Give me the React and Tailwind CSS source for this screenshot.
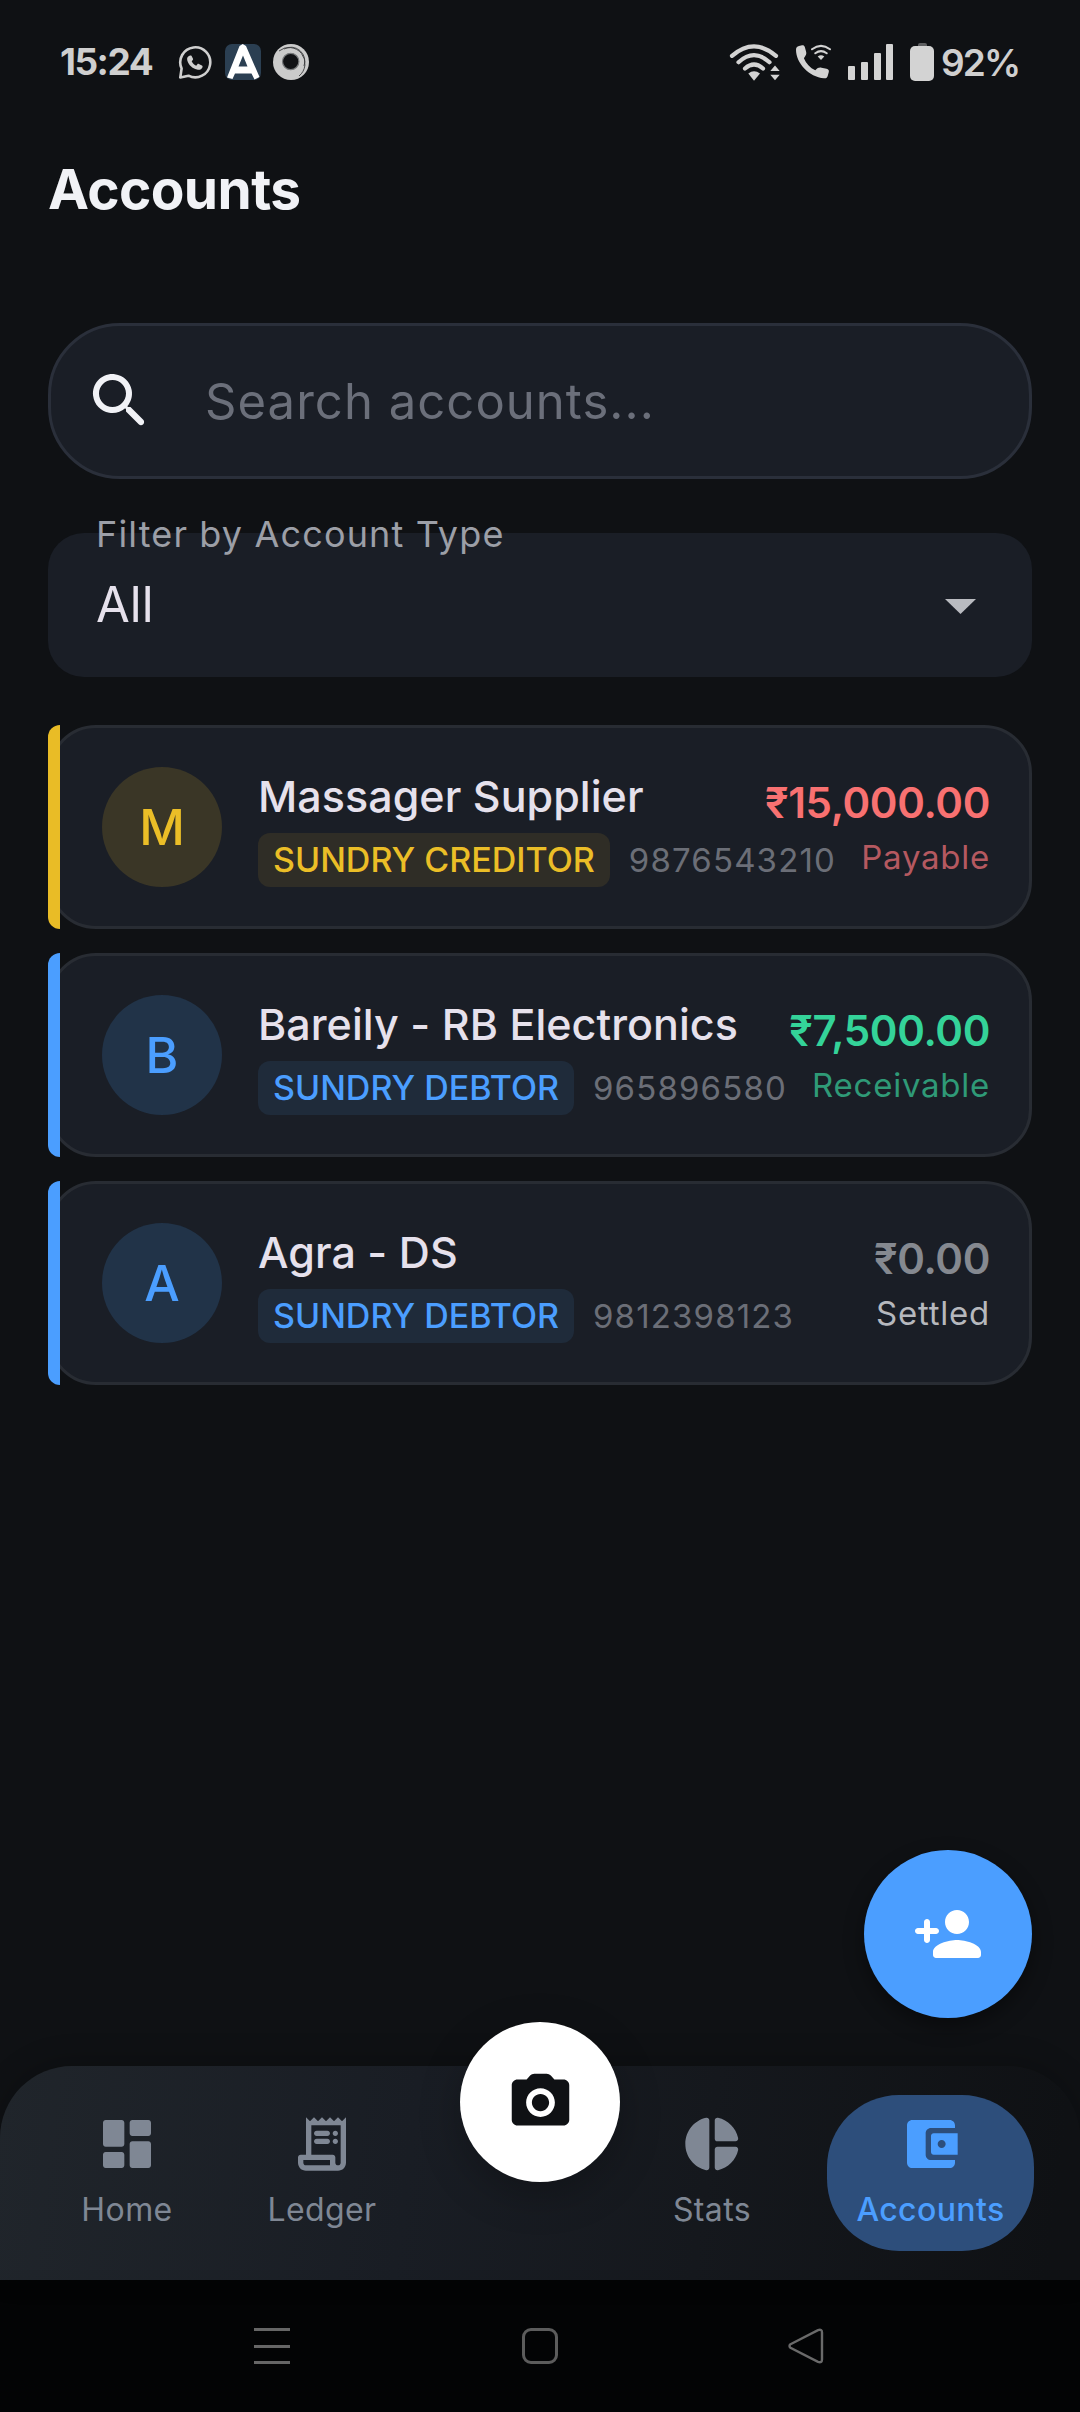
import React from "react";

const CARDS = [
  {
    initial: "M",
    name: "Massager Supplier",
    type: "SUNDRY CREDITOR",
    phone: "9876543210",
    amount: "₹15,000.00",
    status: "Payable",
    bar: "bg-[#e9bc26]",
    avatar: "bg-[#3a3626] text-[#ebbe27]",
    badge: "bg-[#2f2d26] text-[#ebbe27]",
    amountColor: "text-[#f87171]",
    statusColor: "text-[#b55960]",
  },
  {
    initial: "B",
    name: "Bareily - RB Electronics",
    type: "SUNDRY DEBTOR",
    phone: "965896580",
    amount: "₹7,500.00",
    status: "Receivable",
    bar: "bg-[#4b9eff]",
    avatar: "bg-[#213348] text-[#4b9eff]",
    badge: "bg-[#1f2b3a] text-[#4b9eff]",
    amountColor: "text-[#34d399]",
    statusColor: "text-[#2f9a77]",
  },
  {
    initial: "A",
    name: "Agra - DS",
    type: "SUNDRY DEBTOR",
    phone: "9812398123",
    amount: "₹0.00",
    status: "Settled",
    bar: "bg-[#4b9eff]",
    avatar: "bg-[#213348] text-[#4b9eff]",
    badge: "bg-[#1f2b3a] text-[#4b9eff]",
    amountColor: "text-[#858990]",
    statusColor: "text-[#b6b8bd]",
  },
];

const ICONS = {
  search:
    "M15.5 14h-.79l-.28-.27c1.2-1.4 1.82-3.31 1.48-5.34-.47-2.78-2.79-5-5.59-5.34-4.23-.52-7.79 3.04-7.27 7.27.34 2.8 2.56 5.12 5.34 5.59 2.03.34 3.94-.28 5.34-1.48l.27.28v.79l4.25 4.25c.41.41 1.08.41 1.49 0 .41-.41.41-1.08 0-1.49L15.5 14zm-6 0C7.01 14 5 11.99 5 9.5S7.01 5 9.5 5 14 7.01 14 9.5 11.99 14 9.5 14z",
  home: "M4 13h6c.55 0 1-.45 1-1V4c0-.55-.45-1-1-1H4c-.55 0-1 .45-1 1v8c0 .55.45 1 1 1zm0 8h6c.55 0 1-.45 1-1v-4c0-.55-.45-1-1-1H4c-.55 0-1 .45-1 1v4c0 .55.45 1 1 1zm10 0h6c.55 0 1-.45 1-1v-8c0-.55-.45-1-1-1h-6c-.55 0-1 .45-1 1v8c0 .55.45 1 1 1zM13 4v4c0 .55.45 1 1 1h6c.55 0 1-.45 1-1V4c0-.55-.45-1-1-1h-6c-.55 0-1 .45-1 1z",
  ledger:
    "M19.5 3.5L18 2l-1.5 1.5L15 2l-1.5 1.5L12 2l-1.5 1.5L9 2 7.5 3.5 6 2v14H4c-.55 0-1 .45-1 1v2c0 1.66 1.34 3 3 3h12c1.66 0 3-1.34 3-3V2l-1.5 1.5zM15 20H6c-.55 0-1-.45-1-1v-1h10v2zm4-1c0 .55-.45 1-1 1s-1-.45-1-1v-2c0-.55-.45-1-1-1H8V5h11v14zM14 7h-4c-.55 0-1 .45-1 1s.45 1 1 1h4c.55 0 1-.45 1-1s-.45-1-1-1zm0 3h-4c-.55 0-1 .45-1 1s.45 1 1 1h4c.55 0 1-.45 1-1s-.45-1-1-1zM17 7c.55 0 1 .45 1 1s-.45 1-1 1-1-.45-1-1 .45-1 1-1zm0 3c.55 0 1 .45 1 1s-.45 1-1 1-1-.45-1-1 .45-1 1-1z",
  stats:
    "M11 3.18v17.64c0 .64-.59 1.12-1.21.98C5.32 20.8 2 16.79 2 12s3.32-8.8 7.79-9.8c.62-.14 1.21.34 1.21.98zm2.03 0v6.81c0 .55.45 1 1 1h6.79c.64 0 1.12-.59.98-1.22-.85-3.76-3.8-6.72-7.55-7.57-.63-.14-1.22.34-1.22.98zm0 10.83v6.81c0 .64.59 1.12 1.22.98 3.76-.85 6.71-3.82 7.56-7.58.14-.62-.35-1.22-.98-1.22h-6.79c-.56.01-1.01.46-1.01 1.01z",
  wallet:
    "M10 16V8c0-1.1.89-2 2-2h9V5c0-1.1-.9-2-2-2H5c-1.11 0-2 .9-2 2v14c0 1.1.89 2 2 2h14c1.1 0 2-.9 2-2v-1h-9c-1.11 0-2-.9-2-2zm3-8c-.55 0-1 .45-1 1v6c0 .55.45 1 1 1h9V8h-9zm3 5.5c-.83 0-1.5-.67-1.5-1.5s.67-1.5 1.5-1.5 1.5.67 1.5 1.5-.67 1.5-1.5 1.5z",
  camera:
    "M20 4h-3.17l-1.24-1.35A1.99 1.99 0 0 0 14.12 2H9.88c-.56 0-1.1.24-1.48.65L7.17 4H4c-1.1 0-2 .9-2 2v12c0 1.1.9 2 2 2h16c1.1 0 2-.9 2-2V6c0-1.1-.9-2-2-2zm-8 13c-2.76 0-5-2.24-5-5s2.24-5 5-5 5 2.24 5 5-2.24 5-5 5zm0-8c1.66 0 3 1.34 3 3s-1.34 3-3 3-3-1.34-3-3 1.34-3 3-3z",
  addPerson:
    "M15 12c2.21 0 4-1.79 4-4s-1.79-4-4-4-4 1.79-4 4 1.79 4 4 4zm-9-2V8c0-.55-.45-1-1-1s-1 .45-1 1v2H2c-.55 0-1 .45-1 1s.45 1 1 1h2v2c0 .55.45 1 1 1s1-.45 1-1v-2h2c.55 0 1-.45 1-1s-.45-1-1-1H6zm9 4c-2.67 0-8 1.34-8 4v1c0 .55.45 1 1 1h14c.55 0 1-.45 1-1v-1c0-2.66-5.33-4-8-4z",
};

function Icon({ name, className }) {
  return (
    <svg viewBox="0 0 24 24" fill="currentColor" className={`shrink-0 ${className}`}>
      <path d={ICONS[name]} />
    </svg>
  );
}

function StatusBar() {
  return (
    <div className="flex h-[124px] items-center pl-[60px] text-[#cfcfcf]">
      <div className="flex w-[669px] items-center">
        <span className="w-[118px] text-[37px] font-bold tracking-[-1.5px]">15:24</span>
        <svg viewBox="0 0 36 36" fill="none" className="mt-[2px] h-[36px] w-[36px]">
          <path d="M2.3 32.4L3.6 23.5A15 15 0 1 1 10.5 30.7z" stroke="#cfcfcf" strokeWidth="2.6" strokeLinejoin="round" />
          <path d="M11.5 10.8c-2 .8-2.8 2.4-2.2 4.7 1.5 4.7 5 7.9 9.7 9.1 2.5.6 4.8-.3 5.5-2.4.3-.8 0-1.4-.6-1.7l-3-1.5c-.6-.3-1.1-.2-1.5.3l-1.2 1.4c-2-.9-3.5-2.4-4.5-4.5l1.1-1.3c.4-.5.4-.9.1-1.5l-1.3-2.3c-.4-.6-1.3-.6-2.1-.3z" fill="#cfcfcf" />
        </svg>
        <svg viewBox="0 0 36 36" className="ml-[11px] h-[36px] w-[36px]">
          <rect width="36" height="36" rx="7" fill="#2b3f52" />
          <path d="M17.7 0L21 2L34.5 33L29.5 35.5L26.5 29.5H10L7.5 35L2 33.5L14.5 2zM18 11.5L13.5 22.5H22.5z" fill="#fff" />
        </svg>
        <svg viewBox="0 0 36 36" className="ml-[12px] h-[36px] w-[36px]">
          <circle cx="18" cy="18" r="18" fill="#cbcbcb" />
          <circle cx="17.7" cy="17.5" r="8.2" fill="#111215" stroke="#77797b" strokeWidth="1.2" />
          <path d="M6 7A15.5 15.5 0 0 1 26 32M11 5A14 14 0 0 1 31 22" fill="none" stroke="#3a3b3d" strokeWidth=".9" />
        </svg>
      </div>
      <div className="flex items-center">
        <svg viewBox="0 0 52 38" fill="none" stroke="#d3d3d3" strokeWidth="4.2" strokeLinecap="round" className="h-[38px] w-[52px]">
          <path d="M3 12.8Q25 -6 47 12.8M9.5 19.2Q25 5 40.5 19.2M16 25.5Q25 17.5 34 25.5" />
          <path d="M19.3 30.5q5.7-4.5 11.7 0l-6 7.2z" fill="#d3d3d3" stroke="none" />
          <path d="M41.3 27.9l4.7-5.4 4.7 5.4zM41.3 31.8l4.7 5.4 4.7-5.4z" fill="#d3d3d3" stroke="none" />
        </svg>
        <svg viewBox="0 0 36 36" fill="none" className="ml-[15px] h-[36px] w-[36px]">
          <path d="M0 5.7C0 3.5 1 2.8 3 2L6 1.2C7.5 1 8.3 1.5 8.8 3L10.2 8C10.6 10 10 11.5 7.9 14.2C10 19.5 14 23.8 19.3 26.3C21.5 23.8 23.3 23.3 25.5 23.7L30.5 24.8C32.5 25.3 33.2 26.3 32.8 28L31.7 32C31 34 30.3 34.5 28 34.3C13 33 0 19 0 5.7z" fill="#d3d3d3" />
          <path d="M16 5.3q9-6.8 18 0M19.3 9.3q5.7-4.3 11.4 0" stroke="#d3d3d3" strokeWidth="2" strokeLinecap="round" />
          <path d="M21.7 12.5q3.3-2.5 6.6 0L25 16z" fill="#d3d3d3" />
        </svg>
        <div className="ml-[16px] flex h-[36px] w-[45.5px] items-end justify-between">
          <span className="h-[14px] w-[7px] rounded-[1px] bg-[#d3d3d3]" />
          <span className="h-[18px] w-[7px] rounded-[1px] bg-[#d3d3d3]" />
          <span className="h-[27px] w-[7px] rounded-[1px] bg-[#d3d3d3]" />
          <span className="h-[36px] w-[7px] rounded-[1px] bg-[#d3d3d3]" />
        </div>
        <div className="ml-[16.5px] flex w-[24px] flex-col items-center">
          <span className="h-[3px] w-[9px] rounded-t-[2px] bg-[#5d5e60]" />
          <span className="h-[35px] w-[24px] rounded-[5px] bg-[#d3d3d3]" />
        </div>
        <span className="mt-[2px] ml-[7px] text-[37px] font-semibold tracking-[-1.86px]">92%</span>
      </div>
    </div>
  );
}

function AccountCard({ card }) {
  return (
    <div className="relative flex h-[204px] rounded-[48px] border-[3px] border-[#282c33] bg-[#1a1e26] pl-[51px] pr-[39px]">
      <span className={`absolute -left-[3px] -top-[3px] h-[204px] w-[12px] rounded-l-[12px] ${card.bar}`} />
      <div className={`mt-[39px] flex h-[120px] w-[120px] shrink-0 items-center justify-center rounded-full text-[50px] leading-none font-[550] ${card.avatar}`}>
        {card.initial}
      </div>
      <div className="mt-[42px] ml-[36px] flex min-w-0 flex-1 flex-col gap-[10px]">
        <div className="text-[43px] leading-[53px] font-medium tracking-[0.05px] whitespace-nowrap text-[#e6e1ec]">{card.name}</div>
        <div className="flex items-center gap-[19px]">
          <span className={`rounded-[12px] px-[15px] text-[34px] leading-[54px] font-medium whitespace-nowrap ${card.badge}`}>
            {card.type}
          </span>
          <span className="text-[33px] leading-[52px] tracking-[1.15px] text-[#6b6e77]">{card.phone}</span>
        </div>
      </div>
      <div className="mt-[50px] flex shrink-0 flex-col items-end gap-[9px]">
        <div className={`text-[42px] leading-[50px] font-semibold tracking-[-0.35px] ${card.amountColor}`}>{card.amount}</div>
        <div className={`text-[33px] leading-[40px] tracking-[0.75px] ${card.statusColor}`}>{card.status}</div>
      </div>
    </div>
  );
}

function NavItem({ icon, label, className }) {
  return (
    <div className={`mt-[29px] flex h-[156px] shrink-0 flex-col items-center gap-[14px] pt-[17px] ${className}`}>
      <Icon name={icon} className="h-[64px] w-[64px]" />
      <span className="text-[32px] leading-[40px] tracking-[0.4px]">{label}</span>
    </div>
  );
}

export default function App() {
  return (
    <div className="relative flex h-[2412px] w-[1080px] flex-col overflow-hidden bg-[#0f1114] font-['Inter','Noto_Sans',sans-serif]">
      <StatusBar />
      <h1 className="pl-[48px] text-[55px] leading-[130px] font-bold tracking-[-0.6px] text-[#f1f2f6]">Accounts</h1>

      <main className="flex flex-1 flex-col px-[48px] pt-[69px]">
        <div className="flex h-[156px] shrink-0 items-center rounded-[72px] border-[3px] border-[#2a2f3a] bg-[#1a1e26] pl-[33px]">
          <Icon name="search" className="h-[72px] w-[72px] text-[#f1f2f6]" />
          <span className="mt-[1px] ml-[49px] text-[49px] tracking-[1.05px] text-[#6b6f7a]">Search accounts...</span>
        </div>

        <div className="relative mt-[54px] flex h-[144px] shrink-0 items-center justify-between rounded-[36px] bg-[#1a1e26] pl-[48px] pr-[56px]">
          <span className="absolute -top-[21px] left-[48px] text-[36px] leading-[44px] tracking-[1.15px] text-[#9c9fa7]">
            Filter by Account Type
          </span>
          <span className="text-[49px] text-[#e6e1ec]">All</span>
          <svg viewBox="0 0 31 15" className="mt-[3px] h-[15px] w-[31px]">
            <path d="M0 0H31L15.5 15z" fill="#b9bbc0" />
          </svg>
        </div>

        <div className="mt-[48px] flex flex-col gap-[24px]">
          {CARDS.map((card) => (
            <AccountCard key={card.name} card={card} />
          ))}
        </div>
      </main>

      <button className="absolute top-[1850px] right-[48px] flex h-[168px] w-[168px] items-center justify-center rounded-full bg-[#4b9eff] text-white shadow-[0_8px_20px_rgba(0,0,0,0.4)]">
        <Icon name="addPerson" className="h-[72px] w-[72px]" />
      </button>

      <nav className="relative flex h-[214px] shrink-0 rounded-t-[72px] bg-[linear-gradient(97deg,#20252b_0%,#191d24_38%,#15181d_65%,#0f1114_97%)] pl-[30px] text-[#7f8794] shadow-[0_-4px_30px_rgba(0,0,0,0.2)]">
        <NavItem icon="home" label="Home" className="w-[194px]" />
        <NavItem icon="ledger" label="Ledger" className="w-[196px]" />
        <div className="flex w-[240px] shrink-0 justify-center">
          <button className="-mt-[44px] flex h-[160px] w-[160px] items-center justify-center rounded-full bg-white text-[#0f1114] shadow-[0_12px_40px_rgba(0,0,0,0.25)]">
            <Icon name="camera" className="h-[69px] w-[69px]" />
          </button>
        </div>
        <NavItem icon="stats" label="Stats" className="w-[104px]" />
        <NavItem icon="wallet" label="Accounts" className="ml-[63px] w-[207px] rounded-[72px] bg-[#2d4e7b] font-medium text-[#4b9eff]" />
      </nav>

      <div className="flex h-[132px] shrink-0 items-center bg-[#030405] pl-[254px]">
        <div className="flex w-[36px] flex-col gap-[13.5px]">
          <span className="h-[3px] bg-[#666666]" />
          <span className="h-[3px] bg-[#666666]" />
          <span className="h-[3px] bg-[#666666]" />
        </div>
        <span className="ml-[232px] h-[36px] w-[36px] rounded-[9px] border-[3px] border-[#5c5c5c]" />
        <svg viewBox="0 0 36 36" fill="none" className="ml-[230px] h-[36px] w-[36px]">
          <path d="M2.5 16.2L30 2.2Q34 .8 34 4.5V31.5Q34 35.2 30 33.8L2.5 19.8Q.5 18 2.5 16.2z" stroke="#6a6a6a" strokeWidth="2.4" />
        </svg>
      </div>
    </div>
  );
}
